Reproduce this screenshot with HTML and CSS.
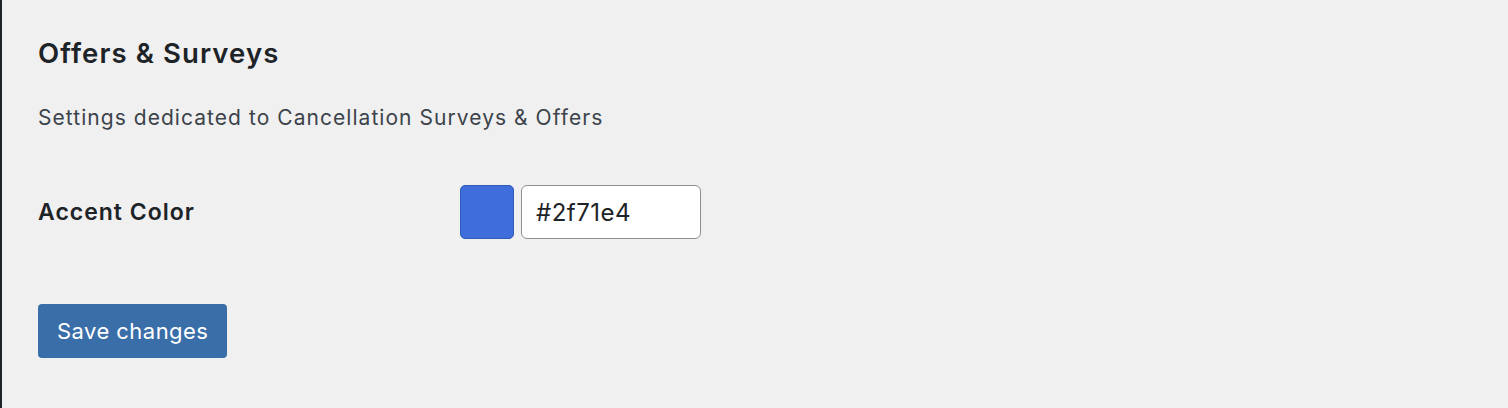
FILE: index.html
```html
<!DOCTYPE html>
<html lang="en">
<head>
  <meta charset="UTF-8">
  <meta name="viewport" content="width=device-width, initial-scale=1.0">
  <title>Offers &amp; Surveys</title>
  <link rel="stylesheet" href="styles.css">
</head>
<body>
  <div class="settings-wrap">
    <h2>Offers &amp; Surveys</h2>
    <p class="description">Settings dedicated to Cancellation Surveys &amp; Offers</p>
    <form id="settingsForm">
      <div class="form-row">
        <label for="accentColor">Accent Color</label>
        <div class="color-field">
          <span class="swatch" id="swatch"></span>
          <input type="text" id="accentColor" name="accent_color" value="#2f71e4">
        </div>
      </div>
      <button type="submit">Save changes</button>
    </form>
  </div>
</body>
</html>
```

FILE: styles.css
```css
:root {
  --text-color: #1d2327;
  --muted-color: #3c434a;
  --primary-color: #3a6ea9;
  --border-color: #8c8f94;
}

html, body {
  height: 100%;
}

body {
  margin: 0;
  background-color: #f0f0f1;
  font-family: Inter, "Noto Sans", sans-serif;
  color: var(--text-color);
}

.settings-wrap {
  min-height: 100%;
  box-sizing: border-box;
  border-left: 2px solid var(--text-color);
  padding: 36px 0 0 36px;
}

h2 {
  margin: 0;
  font-size: 27.5px;
  font-weight: 600;
  line-height: 34px;
  letter-spacing: 1.1px;
}

.description {
  margin: 34px 0 0;
  font-size: 21px;
  line-height: 28px;
  letter-spacing: 1.05px;
  color: var(--muted-color);
}

.form-row {
  display: flex;
  align-items: center;
  margin-top: 53px;
}

label {
  width: 422px;
  font-size: 23px;
  font-weight: 600;
  letter-spacing: 1px;
}

.color-field {
  display: flex;
  align-items: center;
  gap: 7px;
}

.swatch {
  width: 54px;
  height: 54px;
  box-sizing: border-box;
  border: 1px solid #2f5bb8;
  border-radius: 5px;
  background-color: #3f6edc;
}

input {
  width: 180px;
  height: 54px;
  box-sizing: border-box;
  padding: 0 14px;
  border: 1px solid var(--border-color);
  border-radius: 6px;
  background-color: white;
  font-family: inherit;
  font-size: 24px;
  letter-spacing: 0.5px;
  color: var(--text-color);
}

input:focus {
  outline: none;
  border-color: var(--primary-color);
}

button {
  margin-top: 65px;
  height: 54px;
  padding: 0 19px;
  border: none;
  border-radius: 4px;
  background-color: var(--primary-color);
  color: white;
  font-family: inherit;
  font-size: 22px;
  letter-spacing: 0.45px;
  cursor: pointer;
}

button:hover {
  background-color: #2f5f96;
}
```
